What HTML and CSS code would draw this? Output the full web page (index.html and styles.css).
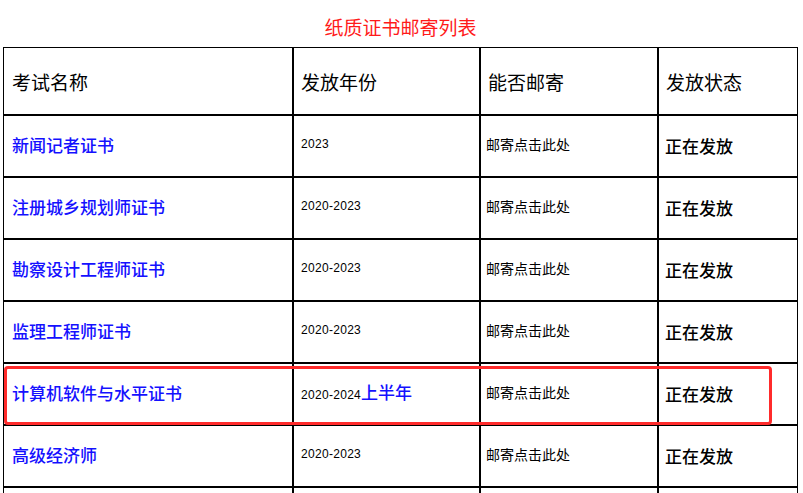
FILE: index.html
```html
<!DOCTYPE html>
<html lang="zh-CN">
<head>
<meta charset="utf-8">
<title>纸质证书邮寄列表</title>
<link rel="stylesheet" href="styles.css">
</head>
<body>
<div class="page">
  <h1 class="title">纸质证书邮寄列表</h1>
  <table class="cert-table">
    <colgroup>
      <col class="c1"><col class="c2"><col class="c3"><col class="c4">
    </colgroup>
    <thead>
      <tr>
        <th>考试名称</th>
        <th>发放年份</th>
        <th>能否邮寄</th>
        <th>发放状态</th>
      </tr>
    </thead>
    <tbody>
      <tr>
        <td class="name">新闻记者证书</td>
        <td class="year">2023</td>
        <td class="mail">邮寄点击此处</td>
        <td class="status">正在发放</td>
      </tr>
      <tr>
        <td class="name">注册城乡规划师证书</td>
        <td class="year">2020-2023</td>
        <td class="mail">邮寄点击此处</td>
        <td class="status">正在发放</td>
      </tr>
      <tr>
        <td class="name">勘察设计工程师证书</td>
        <td class="year">2020-2023</td>
        <td class="mail">邮寄点击此处</td>
        <td class="status">正在发放</td>
      </tr>
      <tr>
        <td class="name">监理工程师证书</td>
        <td class="year">2020-2023</td>
        <td class="mail">邮寄点击此处</td>
        <td class="status">正在发放</td>
      </tr>
      <tr>
        <td class="name">计算机软件与水平证书</td>
        <td class="year">2020-2024<span class="half">上半年</span></td>
        <td class="mail">邮寄点击此处</td>
        <td class="status">正在发放</td>
      </tr>
      <tr>
        <td class="name">高级经济师</td>
        <td class="year">2020-2023</td>
        <td class="mail">邮寄点击此处</td>
        <td class="status">正在发放</td>
      </tr>
      <tr class="next-row">
        <td></td>
        <td></td>
        <td></td>
        <td></td>
      </tr>
    </tbody>
  </table>
  <div class="highlight"></div>
</div>
</body>
</html>
```
FILE: styles.css
```css
html, body {
  margin: 0;
  padding: 0;
  background: #fff;
}

.page {
  position: relative;
  padding-left: 3px;
  font-family: "Noto Sans CJK SC", "Liberation Sans", sans-serif;
  color: #000;
}

.title {
  margin: 0;
  height: 47px;
  display: flex;
  align-items: center;
  justify-content: center;
  padding-top: 6px;
  box-sizing: border-box;
  width: 795px;
  font-size: 19px;
  font-weight: normal;
  color: #ff1a1a;
  line-height: 1;
}

.cert-table {
  table-layout: fixed;
  width: 795px;
  border-collapse: separate;
  border-spacing: 0;
  border-top: 1px solid #000;
  border-left: 1px solid #000;
  border-right: 1px solid #000;
}

.c1 { width: 290px; }
.c2 { width: 187px; }
.c3 { width: 178px; }
.c4 { width: 138px; }

.cert-table th,
.cert-table td {
  box-sizing: border-box;
  border-right: 2px solid #000;
  border-bottom: 2px solid #000;
  padding: 0 0 0 7px;
  vertical-align: middle;
  text-align: left;
  white-space: nowrap;
  overflow: hidden;
}

.cert-table th:last-child,
.cert-table td:last-child {
  border-right: 0;
}

.cert-table th:first-child,
.cert-table td:first-child {
  padding-left: 8px;
}

.cert-table thead tr {
  height: 68px;
}

.cert-table tbody tr {
  height: 62px;
}

.cert-table th {
  font-size: 19px;
  font-weight: normal;
  line-height: 1;
}

.name {
  font-size: 17px;
  font-weight: 500;
  color: #1410ff;
  line-height: 1;
  padding-bottom: 3px !important;
}

.year {
  font-family: "Liberation Sans", sans-serif;
  font-size: 12px;
  letter-spacing: 0.3px;
  line-height: 1;
  padding-bottom: 4px !important;
}

.half {
  font-family: "Noto Sans CJK SC", sans-serif;
  font-size: 17px;
  font-weight: 500;
  letter-spacing: 0;
  color: #1410ff;
}

.mail {
  font-size: 14px;
  line-height: 1;
  padding-left: 5px !important;
  padding-bottom: 4px !important;
}

.status {
  font-size: 17px;
  font-weight: 500;
  line-height: 1;
  padding-left: 6px !important;
  padding-bottom: 2px !important;
}

.highlight {
  position: absolute;
  left: 4px;
  top: 366px;
  width: 768px;
  height: 59px;
  box-sizing: border-box;
  border: 3px solid #ff2b2b;
  border-radius: 4px;
  pointer-events: none;
}
```
